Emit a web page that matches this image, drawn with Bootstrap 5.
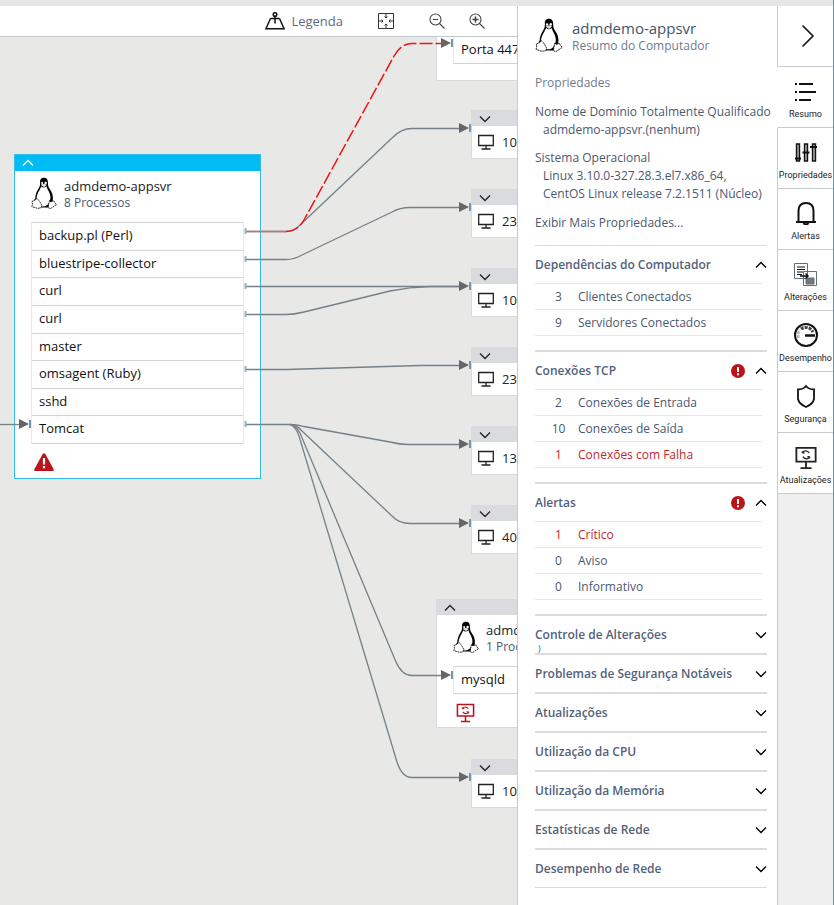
<!DOCTYPE html>
<html lang="pt-BR">
<head>
<meta charset="utf-8">
<meta name="viewport" content="width=device-width, initial-scale=1">
<title>Mapa de Serviço – admdemo-appsvr</title>
<link rel="stylesheet" href="https://cdn.jsdelivr.net/npm/bootstrap@5.3.0/dist/css/bootstrap.min.css">
<style>
  body { font-family: "Open Sans", "Noto Sans", sans-serif; font-size: 13px; line-height: 18px; color: #222; background: #efefef; }
  button { color: inherit; }
  .topstrip { height: 6px; background: #e6e6e6; }
  .page { border-right: 1px solid #6a93c4; }
  .ink { fill: none; stroke: #111; }
  .slate { color: #4a5870; }

  .toolbar { height: 31px; gap: 34px; padding-right: 32px; border-bottom: 1px solid #c0c6d2; }
  .zooms { gap: 24px; }
  .tool { border: 0; padding: 0; background: none; display: flex; align-items: center; gap: 6px; color: #5d6b80; }
  .canvas { background: #e8e8e6; }
  .links { inset: 0; pointer-events: none; z-index: 2; }

  .node { width: 247px; border: 1px solid #d9dadd; background: #fff; }
  .node-top { height: 15px; padding: 0 7px; background: #dadbdf; border: 0; display: flex; align-items: center; width: 100%; }
  .node-ip { height: 32px; padding: 0 6px; gap: 8px; }
  .node-selected { border-color: #33bdec; }
  .node-selected .node-top { height: 16px; background: #00bcf4; }
  .node-head { padding: 6px 16px 0; gap: 7px; height: 51px; }
  .node-head small { font-size: 12px; line-height: 16px; color: #4a5870; }
  .procs { height: 222px; margin: 0 16px; border: 1px solid #e9e9ea; border-top-color: #d2d2d4; border-bottom-color: #d2d2d4; color: #111; }
  .procs li { padding-left: 7px; line-height: 25px; flex: 1 1 0; border-bottom: 1px solid #d2d2d4; }
  .procs li:last-child { border-bottom: 0; }
  .procs-one { height: 28px; }
  .node-foot { padding: 9px 19px 7px; }

  .panel { width: 260px; padding: 12px 10px 16px 17px; border-left: 1px solid #c6cad1; }
  .panel h1 { font-size: 15px; line-height: 20px; margin: 0; font-weight: 400; color: #44546a; }
  .panel-sub { font-size: 12px; line-height: 16px; color: #6d7b8f; }
  .panel-head { gap: 9px; height: 53px; }
  .panel h2 { font-size: 12px; line-height: 18px; margin: 3px 0 11px; font-weight: 500; color: #6d7b8f; }
  .facts { margin: 0 0 11px; font-size: 12px; line-height: 18px; white-space: nowrap; color: #4a5870; }
  .facts dt { font-weight: 500; }
  .facts dd { margin: 0 0 10px; padding-left: 8px; }
  .more { font-size: 12px; color: #4a5870; text-decoration: none; display: block; margin-bottom: 13px; }
  .sect { border-top: 2px solid #dcdcdf; }
  .sect:first-of-type { border-top-width: 1px; }
  .sect:last-of-type { border-bottom: 1px solid #dcdcdf; }
  .sect-btn { border: 0; padding: 1px 0 0; background: none; width: 100%; height: 37px; gap: 10px; color: #53627b; font-size: 12px; font-weight: 600; text-align: left; white-space: nowrap; }
  .counts { width: 227px; margin-bottom: 14px; color: #4a5870; font-size: 12px; line-height: 25px; }
  .counts th, .counts td { padding: 0; border-top: 1px solid #e8e8ea; font-weight: 400; }
  .counts tr:last-child > * { border-bottom: 1px solid #e8e8ea; }
  .counts td { width: 43px; text-align: center; padding-left: 4px; }
  .counts .bad > * { color: #c0272d; }
  .stray { left: 3px; bottom: 0; font-size: 9px; line-height: 8px; }

  .rail { width: 56px; border-left: 1px solid #c6cad1; }
  .rail-btn { height: 61px; width: 56px; margin-left: -1px; padding: 8px 0 0; background: #fff; border: 0; border-left: 1px solid #c6cad1; border-bottom: 1px solid #c6cad1; font-family: Roboto, sans-serif; font-size: 9px; line-height: 12px; color: #222; display: flex; flex-direction: column; align-items: center; gap: 5px; }
  .rail-btn.active { border-left-color: #fff; }
  .rail-collapse { padding: 0; justify-content: center; }
</style>
<script src="https://cdn.jsdelivr.net/npm/bootstrap@5.3.0/dist/js/bootstrap.bundle.min.js"></script>
</head>
<body>
<svg width="0" height="0" class="position-absolute" aria-hidden="true">
  <defs>
    <symbol id="tux" viewBox="0 0 26 32">
      <path d="M13 .7C9.600.7 8.900 3 9.100 5.500 9.300 8.500 8.600 9.700 7.400 11.800 5.500 14.800 4.300 18 4.200 21.500L3 23l7.500 7.500h6.500L20 29l1.800-6C22.400 18 20.600 14.500 18.400 11.500 17 9.500 17 7.500 16.900 5 16.700 2.200 15.600.7 13 .7z" fill="#000"/>
      <path d="M10.200 9.500c1.900 1.600 3.800 1.300 5.300-.2.600 3 3 5.400 3.700 9 .5 2.500.1 5-1.200 7.500-1.400 3-3.800 3.700-6.600 3.600-2.900-1.200-6-4.200-5.900-8.200.1-3.800 2.800-7.200 4.700-11.700z" fill="#fff"/>
      <path d="M9.800 8c.5-1.200 4.500-1.600 6 0l-2.700 2.300z" fill="#ddd"/><circle cx="11.200" cy="6" r="1.100" fill="#fff"/><circle cx="14.600" cy="6" r="1.200" fill="#fff"/>
      <path d="M1 24.500l3-1.200 1.800-1.900 2.300 2.200 2.700 4.800-.9 2.500-3.600.4-5.500-1.700.7-2.300zM18.500 23.500l1.300 1.500 3-1.300 1.100 2.500 1.700 1.400-3.800 2.500-2.500 1.600-2.300-1.200z" fill="#fff" stroke="#000" stroke-width=".8" stroke-dasharray="2 .6"/>
    </symbol>
    <symbol id="pc" viewBox="0 0 16 16"><path d="M.7 1.500h14.600v10H.7zM8 11.500v3M3.500 15h9" fill="none" stroke="currentColor" stroke-width="1.300"/></symbol>
    <symbol id="pcsync" viewBox="0 0 24 26"><path d="M1.500 2h21v15h-21zM12 17v6M6 24h12" fill="none" stroke="currentColor" stroke-width="2"/><path d="M8 7.500V5.500M8 7.500h2.500M8 7c2-2.500 5.500-2.500 7.500.5M16 11.500v2M16 11.500h-2.500M16 12c-2 2.500-5.500 2.500-7.500-.5" fill="none" stroke="currentColor" stroke-width="1.400"/></symbol>
    <symbol id="up" viewBox="0 0 12 12"><path d="M1 8.500l5-5 5 5" fill="none" stroke="currentColor" stroke-width="1.300"/></symbol>
    <symbol id="down" viewBox="0 0 12 12"><path d="M1 3.500l5 5 5-5" fill="none" stroke="currentColor" stroke-width="1.300"/></symbol>
    <symbol id="bang" viewBox="0 0 14 14"><circle cx="7" cy="7" r="7" fill="#ba141a"/><path d="M7 3v5M7 9.300v2" stroke="#fff" stroke-width="2"/></symbol>
    <symbol id="arrow" viewBox="0 0 12 12"><path d="M0 1v10l10-5z" fill="#666"/><path d="M11 2v8" stroke="#6f98ac" stroke-width="2"/></symbol>
  </defs>
</svg>

<div class="page d-flex flex-column min-vh-100">
  <div class="topstrip"></div>
  <div class="d-flex flex-grow-1">
    <main class="d-flex flex-column flex-grow-1 overflow-hidden">
      <div class="toolbar d-flex align-items-center justify-content-end bg-white" role="toolbar" aria-label="Mapa">
        <button class="tool" type="button">
          <svg width="20" height="18" viewBox="0 0 20 18" class="ink" stroke-width="1.500"><circle cx="10" cy="2.500" r="1.800"/><path d="M10 4.500v7M5.500 6.500h9M5.500 6.500L.9 16.800h18.200L14.500 6.500"/></svg>
          <span>Legenda</span>
        </button>
        <button class="tool" type="button" aria-label="Ajustar à tela">
          <svg width="18" height="18" viewBox="0 0 18 18" fill="none" stroke="#333"><path d="M1.500 1.500h15v15h-15zM9 2v4M9 12v4M2 9h4M12 9h4"/><path d="M7.500 4.500L9 6l1.500-1.500M7.500 13.500L9 12l1.500 1.500M4.500 7.500L6 9l-1.500 1.500M13.500 7.500L12 9l1.500 1.500"/></svg>
        </button>
        <div class="zooms d-flex">
          <button class="tool" type="button" aria-label="Reduzir">
            <svg width="16" height="16" viewBox="0 0 16 16" fill="none" stroke="#444" stroke-width="1.100"><circle cx="6.500" cy="6.500" r="5.500"/><path d="M10.500 10.500l5 5M3.800 6.500h5.400"/></svg>
          </button>
          <button class="tool" type="button" aria-label="Ampliar">
            <svg width="16" height="16" viewBox="0 0 16 16" fill="none" stroke="#444" stroke-width="1.100"><circle cx="6.500" cy="6.500" r="5.500"/><path d="M10.500 10.500l5 5"/><path d="M3.500 6.500h6M6.500 3.500v6" stroke-width="1.600"/></svg>
          </button>
        </div>
      </div>

      <div class="canvas position-relative flex-grow-1 overflow-hidden">
        <svg class="links position-absolute w-100 h-100" aria-hidden="true">
          <g transform="translate(0 -37)" fill="none" stroke="#758186" stroke-width="1.300">
            <path d="M0 424.500H20"/>
            <path d="M246 231.500H286Q294 231.500 300 225L392 138Q401 128.500 412 128.500H460"/>
            <path d="M246 259.500H286Q294 259.500 302 255L392 212Q400 207.500 410 207.500H460"/>
            <path d="M246 286.500H460"/>
            <path d="M246 314.500H286Q294 314.500 304 312L390 291Q410 287 430 286.500H460"/>
            <path d="M246 369.500H286L420 365.500H460"/>
            <path d="M246 424.500H290Q297 424.500 304 426.500L390 442Q400 444.500 408 444.500H460"/>
            <path d="M290 424.500Q297 425 302 431L392 516Q399 523.500 410 523.500H460"/>
            <path d="M290 424.500Q296 426 300 433L396 662Q402 675.500 412 675.500H442"/>
            <path d="M290 424.500Q296 427 299 436L397 762Q402 777.500 412 777.500H460"/>
            <path d="M246 231.500H286" stroke="#c07478"/>
            <path d="M286 231.500Q298 231 304 220L394 56Q401 43.500 412 43.500H441" stroke="#f01414" stroke-width="1.500" stroke-dasharray="13 3"/>
            <path d="M245.500 228v6M245.500 256v6M245.500 283v6M245.500 311v6M245.500 366v6M245.500 421v6" stroke="#8fb4c6" stroke-width="2"/>
          </g>
          <g transform="translate(0 -37)">
            <use href="#arrow" x="19" y="418" width="12" height="12"/>
            <use href="#arrow" x="441" y="37" width="12" height="12"/>
            <use href="#arrow" x="459" y="122" width="12" height="12"/>
            <use href="#arrow" x="459" y="201" width="12" height="12"/>
            <use href="#arrow" x="459" y="280" width="12" height="12"/>
            <use href="#arrow" x="459" y="359" width="12" height="12"/>
            <use href="#arrow" x="459" y="438" width="12" height="12"/>
            <use href="#arrow" x="459" y="517" width="12" height="12"/>
            <use href="#arrow" x="441" y="669" width="12" height="12"/>
            <use href="#arrow" x="459" y="771" width="12" height="12"/>
          </g>
        </svg>

        <section class="node node-selected position-absolute" style="left:14px;top:117px">
          <button class="node-top text-white" type="button" aria-label="Recolher"><svg width="12" height="12"><use href="#up"/></svg></button>
          <div class="node-head d-flex">
            <svg width="26" height="32"><use href="#tux"/></svg>
            <div><div>admdemo-appsvr</div><small class="d-block">8 Processos</small></div>
          </div>
          <ul class="procs list-unstyled d-flex flex-column">
            <li>backup.pl (Perl)</li><li>bluestripe-collector</li><li>curl</li><li>curl</li>
            <li>master</li><li>omsagent (Ruby)</li><li>sshd</li><li>Tomcat</li>
          </ul>
          <div class="node-foot"><svg class="d-block" width="20" height="18" viewBox="0 0 20 18"><path d="M8.800.8q1.200-1.200 2.400 0L19.800 16.500q.2 1.500-1 1.500H1.200Q0 18 .2 16.500z" fill="#ba141a"/><path d="M10 5v6.500M10 13v2.200" stroke="#fff" stroke-width="2.200"/></svg></div>
        </section>

        <section class="node position-absolute" style="left:436px;top:-53px">
          <div class="node-head"></div>
          <ul class="procs procs-one list-unstyled d-flex flex-column mb-0"><li>Porta 447</li></ul>
          <div class="pt-3"></div>
        </section>

        <section class="node position-absolute" style="left:471px;top:73px"><button class="node-top" type="button" aria-label="Expandir"><svg width="12" height="12"><use href="#down"/></svg></button><div class="node-ip d-flex align-items-center"><svg width="16" height="16"><use href="#pc"/></svg>10</div></section>
        <section class="node position-absolute" style="left:471px;top:152px"><button class="node-top" type="button" aria-label="Expandir"><svg width="12" height="12"><use href="#down"/></svg></button><div class="node-ip d-flex align-items-center"><svg width="16" height="16"><use href="#pc"/></svg>23</div></section>
        <section class="node position-absolute" style="left:471px;top:231px"><button class="node-top" type="button" aria-label="Expandir"><svg width="12" height="12"><use href="#down"/></svg></button><div class="node-ip d-flex align-items-center"><svg width="16" height="16"><use href="#pc"/></svg>104</div></section>
        <section class="node position-absolute" style="left:471px;top:310px"><button class="node-top" type="button" aria-label="Expandir"><svg width="12" height="12"><use href="#down"/></svg></button><div class="node-ip d-flex align-items-center"><svg width="16" height="16"><use href="#pc"/></svg>23</div></section>
        <section class="node position-absolute" style="left:471px;top:389px"><button class="node-top" type="button" aria-label="Expandir"><svg width="12" height="12"><use href="#down"/></svg></button><div class="node-ip d-flex align-items-center"><svg width="16" height="16"><use href="#pc"/></svg>13</div></section>
        <section class="node position-absolute" style="left:471px;top:468px"><button class="node-top" type="button" aria-label="Expandir"><svg width="12" height="12"><use href="#down"/></svg></button><div class="node-ip d-flex align-items-center"><svg width="16" height="16"><use href="#pc"/></svg>40</div></section>

        <section class="node position-absolute" style="left:436px;top:562px">
          <button class="node-top" type="button" aria-label="Recolher"><svg width="12" height="12"><use href="#up"/></svg></button>
          <div class="node-head d-flex">
            <svg width="26" height="32"><use href="#tux"/></svg>
            <div class="text-nowrap"><div>admdemo-db</div><small class="d-block">1 Processo</small></div>
          </div>
          <ul class="procs procs-one list-unstyled d-flex flex-column mb-0"><li>mysqld</li></ul>
          <div class="node-foot pb-1" style="color:#ba141a"><svg class="d-block" width="19" height="20"><use href="#pcsync"/></svg></div>
        </section>
        <section class="node position-absolute" style="left:471px;top:722px"><button class="node-top" type="button" aria-label="Expandir"><svg width="12" height="12"><use href="#down"/></svg></button><div class="node-ip d-flex align-items-center"><svg width="16" height="16"><use href="#pc"/></svg>104</div></section>
      </div>
    </main>

    <aside class="panel flex-shrink-0 bg-white">
      <header class="panel-head d-flex">
        <svg width="28" height="34"><use href="#tux"/></svg>
        <div><h1>admdemo-appsvr</h1><div class="panel-sub">Resumo do Computador</div></div>
      </header>
      <h2>Propriedades</h2>
      <dl class="facts">
        <dt>Nome de Domínio Totalmente Qualificado</dt><dd>admdemo-appsvr.(nenhum)</dd>
        <dt>Sistema Operacional</dt><dd>Linux 3.10.0-327.28.3.el7.x86_64,<br>CentOS Linux release 7.2.1511 (Núcleo)</dd>
      </dl>
      <a href="#" class="more">Exibir Mais Propriedades...</a>

      <section class="sect">
        <button class="sect-btn d-flex align-items-center" type="button" aria-expanded="true"><span class="flex-grow-1">Dependências do Computador</span><svg width="12" height="12" color="#000"><use href="#up"/></svg></button>
        <table class="counts"><tr><td>3</td><th scope="row">Clientes Conectados</th></tr><tr><td>9</td><th scope="row">Servidores Conectados</th></tr></table>
      </section>
      <section class="sect">
        <button class="sect-btn d-flex align-items-center" type="button" aria-expanded="true"><span class="flex-grow-1">Conexões TCP</span><svg width="14" height="14"><use href="#bang"/></svg><svg width="12" height="12" color="#000"><use href="#up"/></svg></button>
        <table class="counts"><tr><td>2</td><th scope="row">Conexões de Entrada</th></tr><tr><td>10</td><th scope="row">Conexões de Saída</th></tr><tr class="bad"><td>1</td><th scope="row">Conexões com Falha</th></tr></table>
      </section>
      <section class="sect">
        <button class="sect-btn d-flex align-items-center" type="button" aria-expanded="true"><span class="flex-grow-1">Alertas</span><svg width="14" height="14"><use href="#bang"/></svg><svg width="12" height="12" color="#000"><use href="#up"/></svg></button>
        <table class="counts"><tr class="bad"><td>1</td><th scope="row">Crítico</th></tr><tr><td>0</td><th scope="row">Aviso</th></tr><tr><td>0</td><th scope="row">Informativo</th></tr></table>
      </section>
      <section class="sect position-relative">
        <button class="sect-btn d-flex align-items-center" type="button" aria-expanded="false"><span class="flex-grow-1">Controle de Alterações</span><svg width="12" height="12" color="#000"><use href="#down"/></svg></button>
        <span class="stray slate position-absolute">)</span>
      </section>
      <section class="sect"><button class="sect-btn d-flex align-items-center" type="button" aria-expanded="false"><span class="flex-grow-1">Problemas de Segurança Notáveis</span><svg width="12" height="12" color="#000"><use href="#down"/></svg></button></section>
      <section class="sect"><button class="sect-btn d-flex align-items-center" type="button" aria-expanded="false"><span class="flex-grow-1">Atualizações</span><svg width="12" height="12" color="#000"><use href="#down"/></svg></button></section>
      <section class="sect"><button class="sect-btn d-flex align-items-center" type="button" aria-expanded="false"><span class="flex-grow-1">Utilização da CPU</span><svg width="12" height="12" color="#000"><use href="#down"/></svg></button></section>
      <section class="sect"><button class="sect-btn d-flex align-items-center" type="button" aria-expanded="false"><span class="flex-grow-1">Utilização da Memória</span><svg width="12" height="12" color="#000"><use href="#down"/></svg></button></section>
      <section class="sect"><button class="sect-btn d-flex align-items-center" type="button" aria-expanded="false"><span class="flex-grow-1">Estatísticas de Rede</span><svg width="12" height="12" color="#000"><use href="#down"/></svg></button></section>
      <section class="sect"><button class="sect-btn d-flex align-items-center" type="button" aria-expanded="false"><span class="flex-grow-1">Desempenho de Rede</span><svg width="12" height="12" color="#000"><use href="#down"/></svg></button></section>
    </aside>

    <nav class="rail flex-shrink-0" aria-label="Detalhes">
      <button class="rail-btn rail-collapse" type="button" aria-label="Recolher painel"><svg class="ink ms-1" width="14" height="24" viewBox="0 0 14 24" stroke-width="1.600"><path d="M1.500 1.500L12 12 1.500 22.500"/></svg></button>
      <button class="rail-btn active" type="button">
        <svg class="ink" width="28" height="28" viewBox="0 0 28 28" stroke-width="2"><path d="M3 9h2M7 9h14M3 17h2M7 17h17M3 25h2M7 25h12"/></svg>
        <span>Resumo</span></button>
      <button class="rail-btn" type="button">
        <svg class="ink" width="28" height="28" viewBox="0 0 28 28" stroke-width="1.400"><path d="M4.500 8h3v17h-3zM12.500 8h3v17h-3zM20.500 8h3v17h-3z" fill="#aaa"/><path d="M3 22.500h6M10.500 16.500h7M18 11h7" stroke-width="2"/></svg>
        <span>Propriedades</span></button>
      <button class="rail-btn" type="button">
        <svg class="ink" width="28" height="28" viewBox="0 0 28 28" stroke-width="2"><path d="M4 25h20M6.500 25V14Q6.500 6 14 6t7.500 8v11"/><path d="M11.500 26q2.500 3 5 0"/></svg>
        <span>Alertas</span></button>
      <button class="rail-btn" type="button">
        <svg width="28" height="28" viewBox="0 0 28 28" fill="none" stroke="#5f6f80"><path d="M2.500 5.500h13v15h-13zM11.500 13.500h13v14h-13z" fill="#fff"/><path d="M5 9h8M5 11.500h8M5 14h6M5 16.500h5" stroke="#111"/><path d="M14 20h8v6h-8z" fill="#777"/><path d="M8 18h8M13.500 15.500L16 18l-2.500 2.500" stroke="#111" stroke-width="1.400"/></svg>
        <span>Alterações</span></button>
      <button class="rail-btn" type="button">
        <svg class="ink" width="28" height="28" viewBox="0 0 28 28" stroke-width="2"><circle cx="14" cy="16" r="11"/><path d="M6.500 19A7.500 7.500 0 0 1 8 11" stroke="#bbb" stroke-width="3" stroke-dasharray="3 1"/><path d="M9 10a8 8 0 0 1 12 3" stroke="#444" stroke-width="3" stroke-dasharray="3 1"/><path d="M13 16.500h10" stroke-width="2.500"/></svg>
        <span>Desempenho</span></button>
      <button class="rail-btn" type="button">
        <svg class="ink" width="28" height="28" viewBox="0 0 28 28" stroke-width="1.800"><path d="M14 6Q11 9.500 6 9.500V19q1 5 8 8 7-3 8-8V9.500Q17 9.500 14 6z"/></svg>
        <span>Segurança</span></button>
      <button class="rail-btn" type="button">
        <svg width="28" height="28" viewBox="0 0 28 28" color="#222"><use href="#pcsync" x="3" y="5" width="22" height="24"/></svg>
        <span>Atualizações</span></button>
    </nav>
  </div>
</div>
</body>
</html>
